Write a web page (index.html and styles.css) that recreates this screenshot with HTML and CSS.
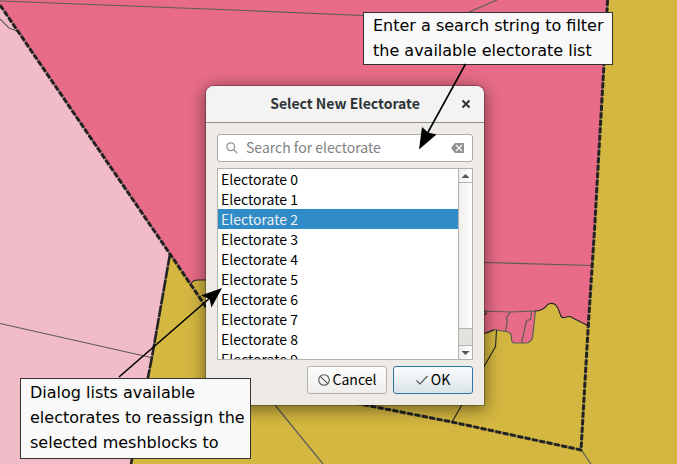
FILE: index.html
```html
<!DOCTYPE html>
<html lang="en">
<head>
<meta charset="utf-8">
<meta name="viewport" content="width=device-width, initial-scale=1">
<title>Select New Electorate</title>
<link rel="stylesheet" href="styles.css">
</head>
<body>
<main class="canvas">
  <svg class="map" viewBox="0 0 677 464" preserveAspectRatio="xMinYMin slice" aria-hidden="true">
    <path class="area-gold" d="M0 0H677V464H0Z"/>
    <path class="area-rose" d="M0 0H607.6L602.5 90L599 150L594.5 230L587.5 325.5L570 316.5C566 316 564 319 561.5 317C559.500 314 559 308 555.500 304.800Q551 302 547.500 304.800C545 308 543 311 538 310.700L535.500 311L532.500 338Q530 343 526 343H515Q511 343 511.500 338Q511.500 333 508 332L494 329.500L484 333.500L206 280L195 280L191 284L0 5Z"/>
    <path class="area-gold" d="M484 311H486V314H484Z"/>
    <path class="area-pink" d="M0 5L170 254L152 357L131 464H0Z"/>
    <path class="minor" d="M0 1L220 9.500L363 15.500M469 12L497 0M484 262.500L592 265.500M0 323.500L151 357.500M275 405L323 464M582 451L591 464"/>
    <path class="minor" d="M484 311L510 312L535 311M484 333.500L494 329.500L508 332Q511.500 333 511.500 338Q511 343 515 343H526Q530 343 532.500 338L535.500 311M510 312.500L506.500 317.500L507 323L505.500 331M531.500 311.500L530.500 319.500L526.500 320.500L521.500 343"/>
    <path class="border" d="M191 284Q193 280 198 280H206M535 311C541 311 544 309 547.500 304.800Q551 302 555.500 304.800C559 308 559.500 314 561.500 317C564 319 566 316 570 316.500L587.500 325.500M484 314H486V311M485 333.500L494 330M496.500 330L495.500 346.500L484 366.500L461.500 405.500L452 422"/>
    <path class="minor" d="M0 19L9 28L17 31"/>
    <path class="under" d="M0 5L170 254L206 307M170 254L152 357L131 464M607.600 0L602.500 90L599 150L594.500 230L588 330L581 450L452 422L350 402"/>
    <path class="dashed" d="M0 5L170 254L206 307M607.600 0L602.500 90L599 150L594.500 230L588 330L581 450L452 422L350 402"/>
    <path class="dashed long" d="M170 254L152 357L131 464"/>
  </svg>

  <form class="dialog" role="dialog" aria-labelledby="dialog-title">
    <header class="titlebar">
      <h1 id="dialog-title">Select New Electorate</h1>
      <button class="close" type="button" aria-label="Close">
        <svg viewBox="0 0 10 10" aria-hidden="true"><path d="M1.500 1.500L8.500 8.500M8.500 1.500L1.500 8.500"/></svg>
      </button>
    </header>
    <div class="content">
      <div class="search">
        <svg class="lens" viewBox="0 0 14 14" aria-hidden="true"><circle cx="5.500" cy="5.500" r="4.500"/><path d="M9 9L13 13"/></svg>
        <input type="text" aria-label="Search for electorate" placeholder="Search for electorate">
        <button class="clear" type="button" aria-label="Clear search">
          <svg viewBox="0 0 13 10" aria-hidden="true"><path class="tag" d="M4 0H13V10H4L0 5Z"/><path class="cross" d="M5 2L11 8M11 2L5 8"/></svg>
        </button>
      </div>
      <div class="list">
        <select size="9" aria-label="Available electorates">
          <option>Electorate 0</option>
          <option>Electorate 1</option>
          <option selected>Electorate 2</option>
          <option>Electorate 3</option>
          <option>Electorate 4</option>
          <option>Electorate 5</option>
          <option>Electorate 6</option>
          <option>Electorate 7</option>
          <option>Electorate 8</option>
          <option>Electorate 9</option>
        </select>
        <div class="scrollbar" aria-hidden="true">
          <svg class="step" viewBox="0 0 13 13"><path d="M2.500 9L6.500 5L10.500 9Z"/></svg>
          <div class="thumb"></div>
          <div class="groove"></div>
          <svg class="step" viewBox="0 0 13 13"><path d="M2.500 5L6.500 9L10.500 5Z"/></svg>
        </div>
      </div>
      <div class="actions">
        <button class="action" type="button">
          <svg viewBox="0 0 12 12" aria-hidden="true"><circle cx="6" cy="6" r="5.300"/><path d="M2.300 2.300L9.700 9.700"/></svg>
          <span>Cancel</span>
        </button>
        <button class="action primary" type="submit">
          <svg viewBox="0 0 12 12" aria-hidden="true"><path d="M0.500 6.500L4 10L11.500 2"/></svg>
          <span>OK</span>
        </button>
      </div>
    </div>
  </form>

  <p class="note note-search">Enter a search string to filter<br>the available electorate list</p>
  <p class="note note-list">Dialog lists available<br>electorates to reassign the<br>selected meshblocks to</p>

  <svg class="arrows" viewBox="0 0 677 464" preserveAspectRatio="xMinYMin slice" aria-hidden="true">
    <path class="shaft" d="M465.500 64L427 134M119 377L211 297"/>
    <path class="head" d="M419 149.500L422 127L428 132.500L436.500 134.500ZM222 288L211.500 307.500L209.500 299L201 295.500Z"/>
  </svg>
</main>
</body>
</html>
```

FILE: styles.css
```css
* {
  box-sizing: border-box;
}

body {
  margin: 0;
  background: #d4b740;
  font-family: "Noto Sans CJK SC", "Noto Sans", sans-serif;
  font-size: 14px;
  color: #000;
}

button,
input,
select {
  font: inherit;
  color: inherit;
}

.canvas {
  position: relative;
  min-height: 100vh;
  overflow: hidden;
}

.map,
.arrows {
  position: absolute;
  inset: 0;
  width: 100%;
  height: 100%;
}

.arrows {
  pointer-events: none;
}

.area-gold { fill: #d4b740; }
.area-rose { fill: #e86c87; }
.area-pink { fill: #f1bbc8; }

.map .minor,
.map .border,
.map .under,
.map .dashed {
  fill: none;
}

.minor { stroke: #5c5c58; stroke-width: 1.2; }
.border { stroke: #232323; stroke-width: 1.1; }
.under { stroke: #666; stroke-width: 1; }
.dashed { stroke: #232323; stroke-width: 3; stroke-dasharray: 6 1.5; }
.dashed.long { stroke-width: 2.6; stroke-dasharray: 12 1; }

.shaft { fill: none; stroke: #000; stroke-width: 1.6; }
.head { fill: #000; }

.dialog {
  position: absolute;
  left: 206px;
  top: 86px;
  width: 278px;
  background: #eeebe7;
  border-radius: 8px 8px 0 0;
  box-shadow: 0 0 0 1px rgba(0, 0, 0, 0.25), 0 3px 16px 2px rgba(0, 0, 0, 0.45);
}

.titlebar {
  display: grid;
  grid-template-columns: 36px 1fr 36px;
  align-items: center;
  height: 37px;
  border-bottom: 1px solid #8f8e8c;
  border-radius: 8px 8px 0 0;
  background: #f3f3f3;
}

.titlebar h1 {
  grid-column: 2;
  margin: 0;
  padding-bottom: 2px;
  font-size: 14px;
  font-weight: 700;
  line-height: 20px;
  text-align: center;
  color: #2e3436;
}

.close {
  display: grid;
  place-items: center;
  height: 36px;
  padding: 0;
  border: 0;
  background: none;
}

.close svg {
  width: 10px;
  height: 10px;
  fill: none;
  stroke: #2e3436;
  stroke-width: 2;
}

.content {
  display: flex;
  flex-direction: column;
  padding: 11px;
}

.search {
  display: flex;
  align-items: center;
  height: 28px;
  padding: 0 8px;
  border: 1px solid #adaba8;
  border-radius: 3px;
  background: #fff;
}

.lens {
  flex: none;
  width: 12px;
  height: 12px;
  fill: none;
  stroke: #929292;
  stroke-width: 1.5;
}

.search input {
  flex: 1;
  min-width: 0;
  height: 24px;
  padding: 0 8px 2px;
  border: 0;
  outline: 0;
  background: none;
}

.search input::placeholder {
  color: #7f7f7f;
}

.clear {
  display: grid;
  padding: 0;
  border: 0;
  background: none;
}

.clear svg {
  width: 13px;
  height: 10px;
}

.tag { fill: #919191; }
.cross { fill: none; stroke: #fff; stroke-width: 1.2; }

.list {
  display: flex;
  height: 192px;
  margin-top: 6px;
  border: 1px solid #b3b1ae;
  background: #fff;
}

.list select {
  flex: 1;
  min-width: 0;
  height: 190px;
  padding: 0;
  border: 0;
  outline: 0;
  background: #fff;
  overflow: hidden;
  scrollbar-width: none;
}

.list option {
  height: 20px;
  min-height: 20px;
  padding: 0 3px 4px;
  line-height: 16px;
  color: #000;
}

.list option:checked {
  background: #308cc6 linear-gradient(#308cc6, #308cc6);
  color: #eff0f1;
}

.scrollbar {
  display: flex;
  flex-direction: column;
  width: 14px;
  border-left: 1px solid #b3b1ae;
  background: linear-gradient(90deg, #f0efed, #fefefe);
}

.step {
  flex: none;
  width: 13px;
  height: 13px;
  fill: #555;
}

.thumb {
  flex: 1;
  border: solid #b3b1ae;
  border-width: 1px 0;
}

.groove {
  height: 17px;
  border-bottom: 1px solid #b3b1ae;
  background: #e3e2df;
}

.actions {
  display: flex;
  justify-content: flex-end;
  gap: 6px;
  margin-top: 6px;
}

.action {
  display: flex;
  align-items: center;
  justify-content: center;
  gap: 3px;
  width: 80px;
  height: 28px;
  padding: 0;
  border: 1px solid #b3b1ae;
  border-radius: 3px;
  background: linear-gradient(#fdfdfd, #efeeec);
  line-height: 20px;
}

.action span {
  padding-bottom: 2px;
}

.action svg {
  width: 12px;
  height: 12px;
  fill: none;
  stroke: #555;
  stroke-width: 1.1;
}

.action.primary {
  border-color: #2a76a6;
  background: linear-gradient(#fbfcfd, #dae3e7);
}

.note {
  position: absolute;
  margin: 0;
  padding: 0 8px 1px 9px;
  border: 1px solid #333;
  background: #f9f9f9;
  font: 16px/25px "DejaVu Sans", sans-serif;
  white-space: nowrap;
}

.note-search {
  left: 363px;
  top: 12px;
}

.note-list {
  left: 20px;
  top: 378px;
  padding: 1px 5px 3px 9px;
}
```
